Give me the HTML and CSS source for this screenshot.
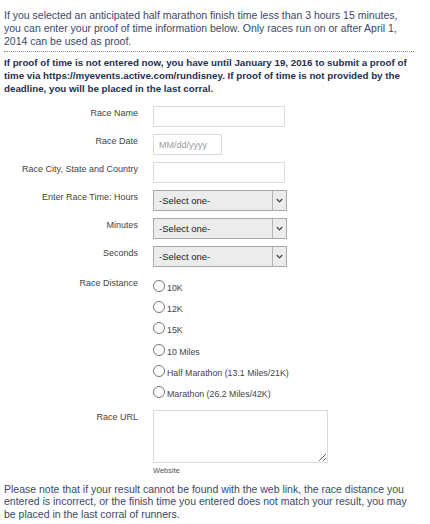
FILE: index.html
```html
<!DOCTYPE html>
<html>
<head>
<meta charset="utf-8">
<link rel="stylesheet" href="styles.css">
</head>
<body>
<div class="page">
  <p class="intro">If you selected an anticipated half marathon finish time less than 3 hours 15 minutes, you can enter your proof of time information below. Only races run on or after April 1, 2014 can be used as proof.</p>
  <p class="notice">If proof of time is not entered now, you have until January 19, 2016 to submit a proof of time via https://myevents.active.com/rundisney. If proof of time is not provided by the deadline, you will be placed in the last corral.</p>

  <form class="form">
    <label class="lbl" for="rn">Race Name</label>
    <div class="field"><input id="rn" class="text wide" type="text"></div>

    <label class="lbl" for="rd">Race Date</label>
    <div class="field"><input id="rd" class="text date" type="text" placeholder="MM/dd/yyyy"></div>

    <label class="lbl" for="rc">Race City, State and Country</label>
    <div class="field"><input id="rc" class="text wide" type="text"></div>

    <label class="lbl" for="rh">Enter Race Time: Hours</label>
    <div class="field">
      <div class="select"><select id="rh"><option>-Select one-</option></select><span class="arrow"><svg width="7" height="5" viewBox="0 0 7 5"><path d="M0.8 1 L3.5 3.8 L6.2 1" fill="none" stroke="#444" stroke-width="1.2"/></svg></span></div>
    </div>

    <label class="lbl" for="rm">Minutes</label>
    <div class="field">
      <div class="select"><select id="rm"><option>-Select one-</option></select><span class="arrow"><svg width="7" height="5" viewBox="0 0 7 5"><path d="M0.8 1 L3.5 3.8 L6.2 1" fill="none" stroke="#444" stroke-width="1.2"/></svg></span></div>
    </div>

    <label class="lbl" for="rs">Seconds</label>
    <div class="field">
      <div class="select"><select id="rs"><option>-Select one-</option></select><span class="arrow"><svg width="7" height="5" viewBox="0 0 7 5"><path d="M0.8 1 L3.5 3.8 L6.2 1" fill="none" stroke="#444" stroke-width="1.2"/></svg></span></div>
    </div>

    <span class="lbl lbl-radio">Race Distance</span>
    <div class="field radios">
      <label class="opt"><input type="radio" name="dist"><span>10K</span></label>
      <label class="opt"><input type="radio" name="dist"><span>12K</span></label>
      <label class="opt"><input type="radio" name="dist"><span>15K</span></label>
      <label class="opt"><input type="radio" name="dist"><span>10 Miles</span></label>
      <label class="opt"><input type="radio" name="dist"><span>Half Marathon (13.1 Miles/21K)</span></label>
      <label class="opt"><input type="radio" name="dist"><span>Marathon (26.2 Miles/42K)</span></label>
    </div>

    <label class="lbl" for="ru">Race URL</label>
    <div class="field">
      <textarea id="ru" class="url"></textarea>
      <div class="hint">Website</div>
    </div>
  </form>

  <p class="outro">Please note that if your result cannot be found with the web link, the race distance you entered is incorrect, or the finish time you entered does not match your result, you may be placed in the last corral of runners.</p>
</div>
</body>
</html>
```

FILE: styles.css
```css
html, body {
  margin: 0;
  padding: 0;
  background: #fff;
}
body {
  font-family: "Liberation Sans", Arial, sans-serif;
}
.page {
  width: 410px;
  padding: 9px 0 0 4px;
}
.intro {
  margin: 0;
  padding-bottom: 3px;
  border-bottom: 1px dotted #8a8a8a;
  font-size: 10.5px;
  line-height: 13px;
  color: #3a4868;
}
.notice {
  margin: 0;
  padding-top: 4px;
  font-size: 9.75px;
  line-height: 13px;
  font-weight: bold;
  color: #23304f;
}
.form {
  display: grid;
  grid-template-columns: 134px 1fr;
  column-gap: 15px;
  row-gap: 7px;
  margin-top: 11px;
}
.lbl {
  text-align: right;
  font-size: 9px;
  line-height: 12px;
  color: #444;
  padding-top: 1px;
}
.field {
  display: flex;
  flex-direction: column;
  align-items: flex-start;
}
.text {
  box-sizing: border-box;
  height: 21px;
  border: 1px solid #dcdcdc;
  padding: 0 5px;
  font-family: "Liberation Sans", Arial, sans-serif;
  font-size: 9px;
  color: #333;
  outline: none;
}
.text::placeholder {
  color: #9a9a9a;
}
.wide {
  width: 132px;
}
.date {
  width: 69px;
}
.select {
  box-sizing: border-box;
  display: flex;
  width: 134px;
  height: 21px;
  border: 1px solid #a8a8a8;
  background: #ececec;
}
.select select {
  flex: 1;
  appearance: none;
  -webkit-appearance: none;
  border: none;
  background: transparent;
  padding: 0 0 0 5px;
  margin: 0;
  font-family: "Liberation Sans", Arial, sans-serif;
  font-size: 9.5px;
  color: #222;
  outline: none;
}
.arrow {
  width: 13px;
  border-left: 1px solid #b4b4b4;
  display: flex;
  align-items: center;
  justify-content: center;
}
.lbl-radio {
  padding-top: 3px;
}
.radios {
  padding-top: 1px;
}
.opt {
  display: flex;
  align-items: center;
  height: 21.3px;
  font-size: 8.8px;
  color: #444;
}
.opt input {
  margin: 0 2px 0 0;
  width: 12px;
  height: 12px;
}
.opt span {
  padding-top: 4px;
}
.url {
  box-sizing: border-box;
  width: 175px;
  height: 53px;
  border: 1px solid #dcdcdc;
  margin: 0;
  resize: both;
  outline: none;
}
.hint {
  margin-top: 3px;
  font-size: 7.5px;
  line-height: 10px;
  color: #555;
}
.outro {
  margin: 7px 0 0;
  font-size: 10.5px;
  line-height: 12.7px;
  color: #3a4868;
}
```
